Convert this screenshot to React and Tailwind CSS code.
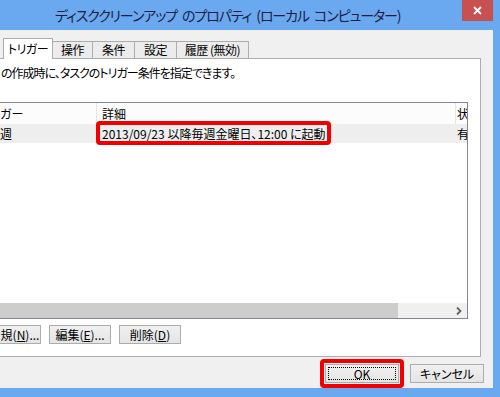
import React from "react";

const jp = "font-['Meiryo_UI','Noto_Sans_CJK_JP',sans-serif] [font-feature-settings:'palt']";

function Btn({ children, className = "" }) {
  return (
    <div
      className={`h-[19px] flex items-center justify-center border border-[#acacac] bg-gradient-to-b from-[#f0f0f0] to-[#e5e5e5] text-[12px] leading-none text-black ${className}`}
    >
      {children}
    </div>
  );
}

export default function App() {
  return (
    <div className={`w-[500px] h-[397px] bg-[#6aa8f0] flex flex-col overflow-hidden ${jp}`}>
      {/* title bar */}
      <div className="relative h-[30px] shrink-0 flex items-center pl-[55px]">
        <span className="text-[14px] tracking-[-1.1px] [word-spacing:3px] leading-none text-[#1c1c44] whitespace-nowrap">
          ディスククリーンアップ のプロパティ (ローカル コンピューター)
        </span>
        <div className="absolute right-[7px] top-0 w-[31px] h-[21px] bg-[#c75050] flex items-center justify-center">
          <svg width="9" height="9" viewBox="0 0 9 9">
            <path d="M1 1L8 8M8 1L1 8" stroke="white" strokeWidth="1.8" />
          </svg>
        </div>
      </div>

      {/* body */}
      <div className="flex-1 mr-[7px] mb-[9px] bg-[#f0f0f0] flex flex-col overflow-hidden">
        {/* tabs */}
        <div className="mt-[8px] h-[20px] flex items-end pl-[3px] relative z-10 text-[12px] text-black tracking-[-0.5px]">
          <div className="w-[50px] h-[21px] mb-[-1px] bg-white border border-b-0 border-[#adadad] flex items-center justify-center pb-[1px]">
            トリガー
          </div>
          <div className="w-[40px] h-[17px] bg-[#ececec] border-t border-r border-[#adadad] flex items-center justify-center">
            操作
          </div>
          <div className="w-[42px] h-[17px] bg-[#ececec] border-t border-r border-[#adadad] flex items-center justify-center">
            条件
          </div>
          <div className="w-[42px] h-[17px] bg-[#ececec] border-t border-r border-[#adadad] flex items-center justify-center">
            設定
          </div>
          <div className="w-[72px] h-[17px] bg-[#ececec] border-t border-r border-[#adadad] flex items-center justify-center">
            履歴 (無効)
          </div>
        </div>

        {/* panel */}
        <div className="w-[481px] h-[299px] shrink-0 bg-white border-t border-r border-b border-[#adadad] flex flex-col text-[12px] text-black">
          <div className="pt-[6px] pl-[1px] leading-[16px] whitespace-nowrap tracking-[-1px]">
            の作成時に、タスクのトリガー条件を指定できます。
          </div>

          {/* list view */}
          <div className="mt-[21px] w-[468px] h-[217px] shrink-0 border-t border-r border-b border-[#828790] flex flex-col overflow-hidden">
            <div className="h-[21px] flex bg-[#fcfcfc] leading-none">
              <div className="w-[97px] border-r border-[#e5e5e5] flex items-center">ガー</div>
              <div className="w-[359px] border-r border-[#e5e5e5] flex items-center pl-[5px]">詳細</div>
              <div className="flex-1 flex items-center pl-[1px] whitespace-nowrap overflow-hidden">状態</div>
            </div>
            <div className="h-[19px] flex bg-[#eeeeee] leading-none">
              <div className="w-[97px] flex items-center">週</div>
              <div className="relative w-[359px] flex items-center pl-[5px] whitespace-nowrap">
                2013/09/23 以降毎週金曜日、12:00 に起動
                <div className="absolute left-[-1px] top-[-3px] w-[235px] h-[24px] border-[4px] border-[#f00000] rounded-[4px]" />
              </div>
              <div className="flex-1 flex items-center pl-[1px] whitespace-nowrap overflow-hidden">有効</div>
            </div>
            <div className="flex-1" />
            <div className="h-[15px] flex bg-[#f0f0f0]">
              <div className="w-[398px] bg-[#cdcdcd]" />
              <div className="flex-1 flex items-center justify-end pr-[5px]">
                <svg width="6" height="8" viewBox="0 0 6 8">
                  <path d="M1 0.5L4.5 4L1 7.5" stroke="#606060" strokeWidth="1.8" fill="none" />
                </svg>
              </div>
            </div>
          </div>

          {/* buttons */}
          <div className="mt-[6px] flex gap-[8px]">
            <Btn className="w-[41px] border-l-0">
              規(<span className="underline">N</span>)...
            </Btn>
            <Btn className="w-[62px]">
              編集(<span className="underline">E</span>)...
            </Btn>
            <Btn className="w-[62px]">
              削除(<span className="underline">D</span>)
            </Btn>
          </div>
        </div>

        {/* bottom buttons */}
        <div className="mt-[7px] flex justify-end gap-[11px] pr-[9px]">
          <div className="relative w-[74px]">
            <Btn className="w-[74px] border-[#3399ff] relative">
              OK
              <div className="absolute inset-[2px] border border-dotted border-black" />
            </Btn>
            <div className="absolute left-[-5px] top-[-5px] w-[84px] h-[29px] border-[4px] border-[#f00000] rounded-[4px]" />
          </div>
          <Btn className="w-[74px]">キャンセル</Btn>
        </div>
      </div>
    </div>
  );
}
